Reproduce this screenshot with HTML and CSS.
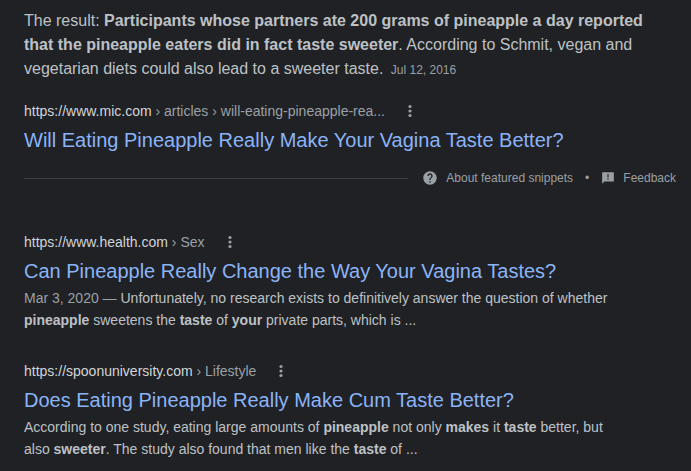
FILE: index.html
```html
<!DOCTYPE html>
<html lang="en">
<head>
<meta charset="utf-8">
<title>Search results</title>
<link rel="stylesheet" href="styles.css">
</head>
<body>
<main class="results">
  <section class="featured">
    <p class="answer">The result: <b>Participants whose partners ate 200 grams of pineapple a day reported that the pineapple eaters did in fact taste sweeter</b>. According to Schmit, vegan and vegetarian diets could also lead to a sweeter taste. <span class="answer-date">Jul 12, 2016</span></p>
    <div class="source">
      <cite class="url">https://www.mic.com <span class="crumb">› articles › will-eating-pineapple-rea...</span></cite>
      <button class="more" type="button" aria-label="About this result"><svg viewBox="0 0 4 14"><circle cx="2" cy="2.500" r="1.600"/><circle cx="2" cy="7" r="1.600"/><circle cx="2" cy="11.500" r="1.600"/></svg></button>
    </div>
    <h3 class="title"><a href="#">Will Eating Pineapple Really Make Your Vagina Taste Better?</a></h3>
    <div class="snippet-bar">
      <a class="bar-link" href="#"><svg class="icon-help" viewBox="0 0 24 24"><path d="M12 2C6.480 2 2 6.480 2 12s4.480 10 10 10 10-4.480 10-10S17.520 2 12 2zm1 17h-2v-2h2v2zm2.070-7.750l-.9.920C13.450 12.900 13 13.500 13 15h-2v-.5c0-1.100.450-2.100 1.170-2.830l1.240-1.260c.370-.360.590-.860.590-1.410 0-1.100-.9-2-2-2s-2 .9-2 2H8c0-2.210 1.790-4 4-4s4 1.790 4 4c0 .880-.360 1.680-.930 2.250z"/></svg><span>About featured snippets</span></a>
      <span class="dot">•</span>
      <a class="bar-link" href="#"><svg class="icon-feedback" viewBox="0 0 24 24"><path d="M22 2H2v20l4-4h16V2zM13 15h-2v-2h2v2zm0-4h-2V5h2v6z"/></svg><span>Feedback</span></a>
    </div>
  </section>
  <article class="result">
    <div class="source">
      <cite class="url">https://www.health.com <span class="crumb">› Sex</span></cite>
      <button class="more" type="button" aria-label="About this result"><svg viewBox="0 0 4 14"><circle cx="2" cy="2.500" r="1.600"/><circle cx="2" cy="7" r="1.600"/><circle cx="2" cy="11.500" r="1.600"/></svg></button>
    </div>
    <h3 class="title"><a href="#">Can Pineapple Really Change the Way Your Vagina Tastes?</a></h3>
    <p class="snippet"><span class="date">Mar 3, 2020 — </span>Unfortunately, no research exists to definitively answer the question of whether <b>pineapple</b> sweetens the <b>taste</b> of <b>your</b> private parts, which is ...</p>
  </article>
  <article class="result">
    <div class="source">
      <cite class="url">https://spoonuniversity.com <span class="crumb">› Lifestyle</span></cite>
      <button class="more" type="button" aria-label="About this result"><svg viewBox="0 0 4 14"><circle cx="2" cy="2.500" r="1.600"/><circle cx="2" cy="7" r="1.600"/><circle cx="2" cy="11.500" r="1.600"/></svg></button>
    </div>
    <h3 class="title"><a href="#">Does Eating Pineapple Really Make Cum Taste Better?</a></h3>
    <p class="snippet">According to one study, eating large amounts of <b>pineapple</b> not only <b>makes</b> it <b>taste</b> better, but also <b>sweeter</b>. The study also found that men like the <b>taste</b> of ...</p>
  </article>
</main>
</body>
</html>
```
FILE: styles.css
```css
* {
  box-sizing: border-box;
}

body {
  margin: 0;
  background: #202124;
  color: #bdc1c6;
  font-family: Arial, "Liberation Sans", sans-serif;
  font-size: 14px;
}

a {
  color: inherit;
  text-decoration: none;
}

.results {
  max-width: 676px;
  padding: 9px 0 8px 24px;
}

.featured {
  padding-bottom: 12px;
}

.answer {
  margin: 0 0 19px;
  max-width: 636px;
  font-size: 16px;
  line-height: 24px;
}

.answer-date {
  margin-left: 3px;
  color: #9aa0a6;
  font-size: 12px;
}

.source {
  display: flex;
  align-items: center;
  gap: 20px;
  height: 20px;
}

.url {
  color: #d2d5d9;
  font-style: normal;
  line-height: 20px;
}

.crumb,
.date {
  color: #9aa0a6;
}

.more {
  display: flex;
  justify-content: center;
  width: 10px;
  padding: 0;
  border: 0;
  background: none;
}

.more svg {
  width: 4px;
  height: 14px;
  fill: #9aa0a6;
}

.title {
  margin: 5px 0 2px;
  color: #8ab4f8;
  font-size: 20px;
  font-weight: 400;
  line-height: 28px;
}

.snippet-bar {
  display: flex;
  align-items: center;
  height: 24px;
  margin-top: 12px;
  color: #9aa0a6;
  font-size: 12px;
}

.snippet-bar::before {
  content: "";
  flex: 1;
  height: 1px;
  margin-right: 14px;
  background: #3c4043;
}

.bar-link {
  display: flex;
  align-items: center;
  gap: 8px;
}

.icon-help {
  width: 16px;
  height: 16px;
  fill: currentColor;
}

.icon-feedback {
  width: 14px;
  height: 14px;
  fill: currentColor;
}

.dot {
  margin: 0 12px;
}

.result {
  margin-top: 30px;
}

.snippet {
  max-width: 600px;
  margin: 0;
  line-height: 22px;
}
```
